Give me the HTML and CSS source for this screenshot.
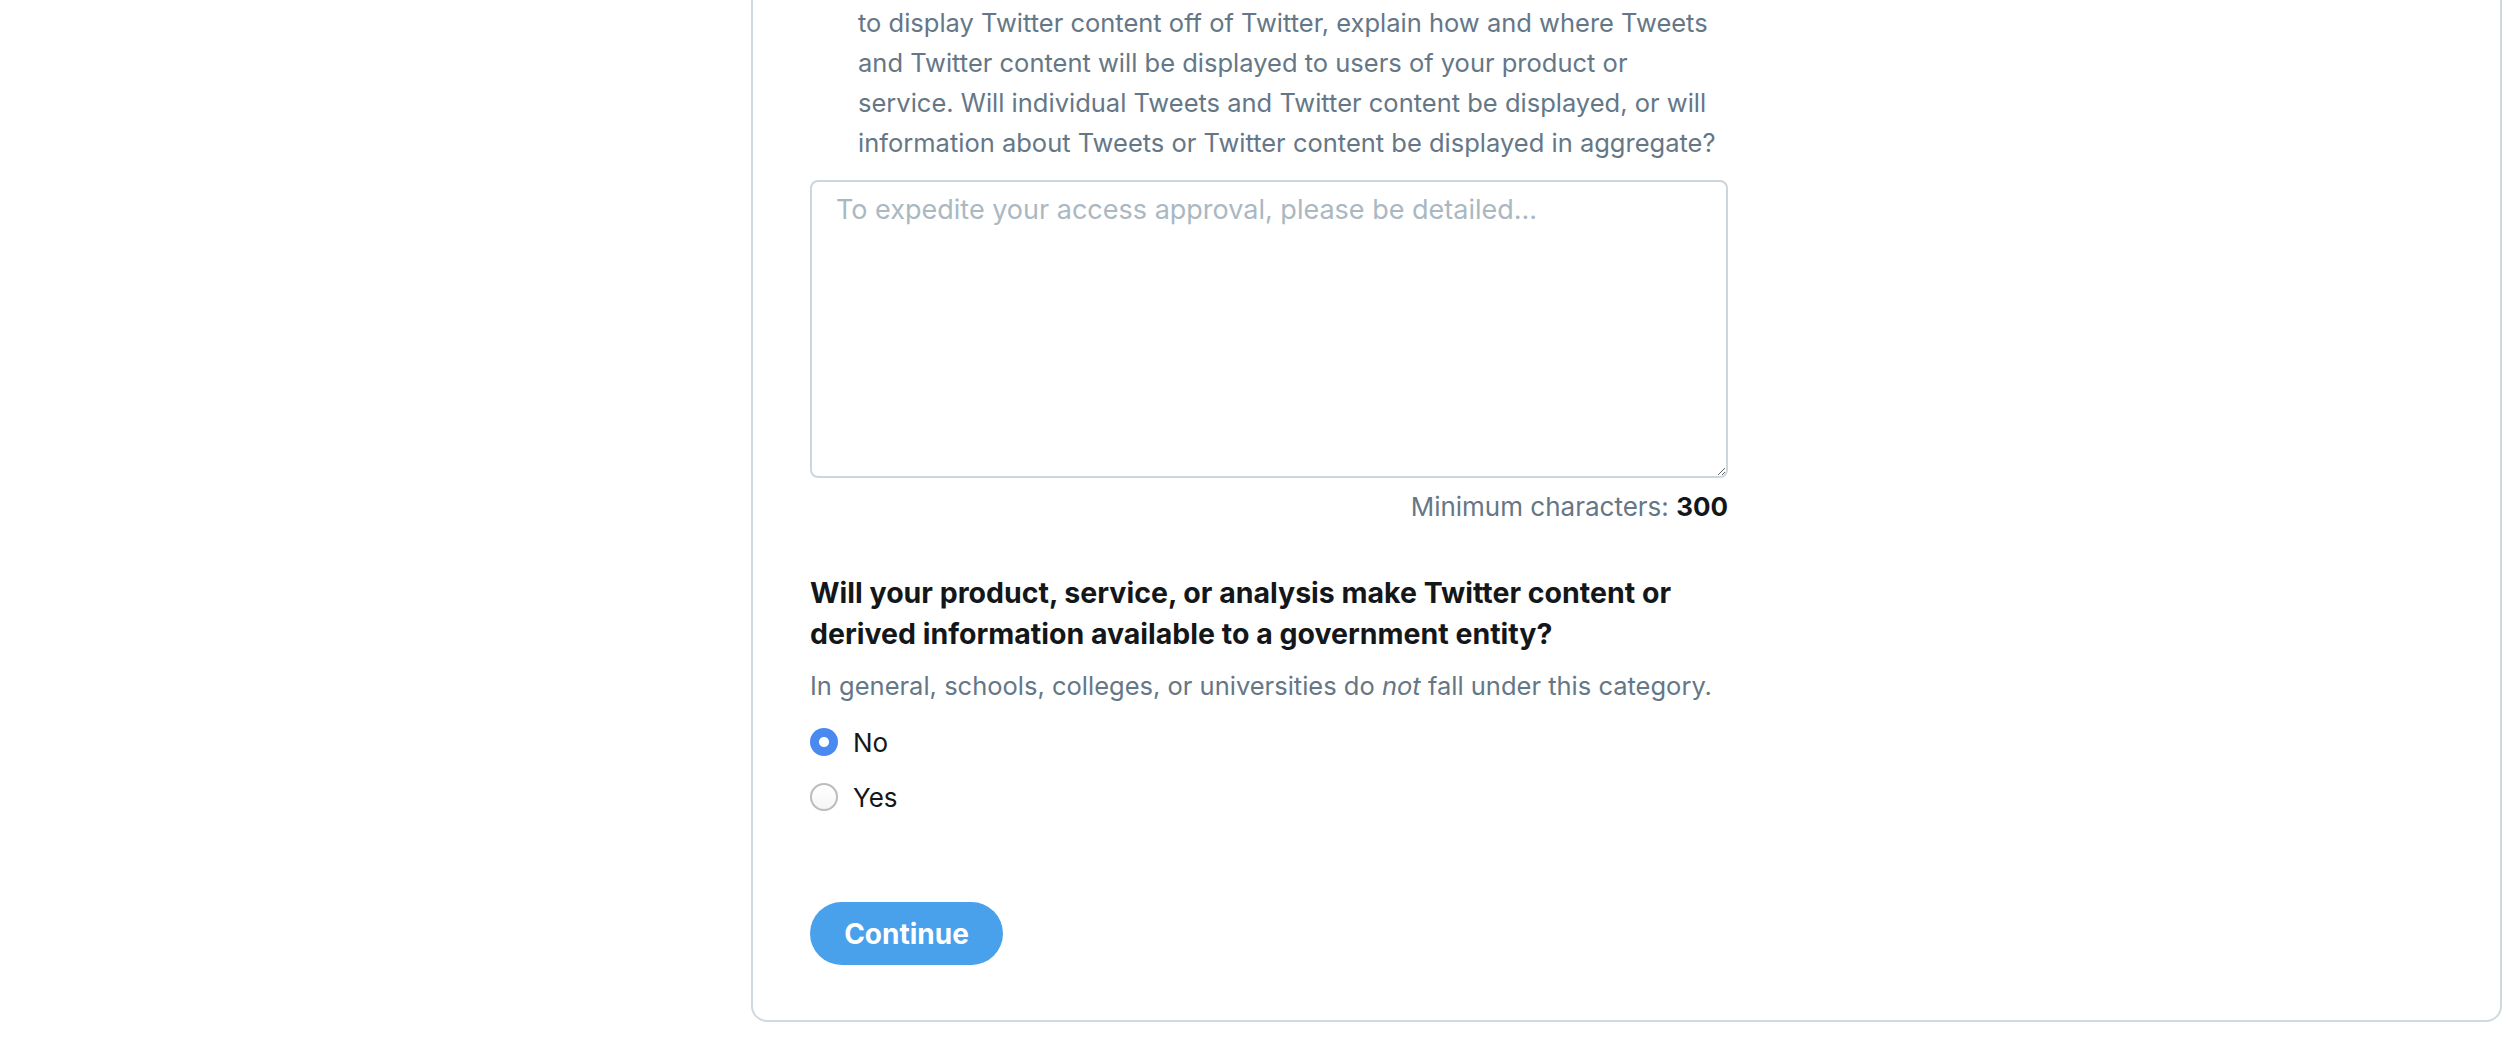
FILE: index.html
```html
<!DOCTYPE html>
<html lang="en">
<head>
<meta charset="utf-8">
<title>Use case details</title>
<link rel="stylesheet" href="styles.css">
</head>
<body>
<div class="page">
  <aside class="sidebar"></aside>
  <main class="card">
    <div class="form">
      <p class="desc">to display Twitter content off of Twitter, explain how and where Tweets<br>and Twitter content will be displayed to users of your product or<br>service. Will individual Tweets and Twitter content be displayed, or will<br>information about Tweets or Twitter content be displayed in aggregate?</p>
      <textarea class="answer" placeholder="To expedite your access approval, please be detailed..."></textarea>
      <div class="min">Minimum characters: <strong>300</strong></div>

      <h2 class="question">Will your product, service, or analysis make Twitter content or<br>derived information available to a government entity?</h2>
      <p class="help">In general, schools, colleges, or universities do <em>not</em> fall under this category.</p>
      <div class="options">
        <label class="option"><input class="radio" type="radio" name="gov" checked><span>No</span></label>
        <label class="option"><input class="radio" type="radio" name="gov"><span>Yes</span></label>
      </div>
      <button class="continue" type="button">Continue</button>
    </div>
  </main>
</div>
</body>
</html>
```

FILE: styles.css
```css
html, body {
  margin: 0;
  padding: 0;
  background: #ffffff;
}
body {
  font-family: Inter, "Noto Sans", sans-serif;
  overflow: hidden;
  height: 1038px;
}
.page {
  display: flex;
  align-items: flex-start;
}
.sidebar {
  flex: none;
  width: 751px;
}
.card {
  flex: none;
  width: 1751px;
  box-sizing: border-box;
  margin-top: -60px;
  border: 2px solid #cfd9de;
  border-radius: 16px;
  padding: 61px 57px 55px;
}
.form {
  width: 918px;
}
.desc {
  margin: 0 0 17px;
  padding-left: 48px;
  color: #657786;
  font-size: 25.5px;
  line-height: 40px;
  white-space: nowrap;
}
.answer {
  display: block;
  width: 918px;
  height: 298px;
  box-sizing: border-box;
  margin: 0;
  border: 2px solid #ccd6dd;
  border-radius: 8px;
  padding: 8px 24px;
  font-family: Inter, "Noto Sans", sans-serif;
  font-size: 27px;
  line-height: 40px;
  color: #14171a;
  resize: vertical;
  outline: none;
}
.answer::placeholder {
  color: #aab8c2;
}
.min {
  margin-top: 9px;
  text-align: right;
  color: #657786;
  font-size: 26px;
  line-height: 40px;
}
.min strong {
  color: #14171a;
  font-weight: 700;
}
.question {
  margin: 45px 0 12px;
  font-size: 28.5px;
  line-height: 41px;
  font-weight: 700;
  color: #14171a;
}
.help {
  margin: 0;
  color: #657786;
  font-size: 25.5px;
  line-height: 40px;
  white-space: nowrap;
}
.options {
  margin-top: 16px;
  display: flex;
  flex-direction: column;
  gap: 15px;
}
.option {
  display: flex;
  align-items: center;
  gap: 15px;
  height: 40px;
  font-size: 26px;
  color: #14171a;
}
.radio {
  -webkit-appearance: none;
  appearance: none;
  flex: none;
  width: 28px;
  height: 28px;
  margin: 0;
  box-sizing: border-box;
  border-radius: 50%;
  border: 2px solid #bcbcbc;
  background: linear-gradient(#ffffff, #f6f6f6);
}
.radio:checked {
  border: none;
  background: radial-gradient(circle, #ffffff 0 4.5px, #4a8af0 5.5px);
}
.continue {
  display: block;
  margin-top: 85px;
  width: 193px;
  height: 63px;
  border: none;
  border-radius: 32px;
  background: #4aa1eb;
  color: #ffffff;
  font-family: Inter, "Noto Sans", sans-serif;
  font-size: 28px;
  font-weight: 700;
  padding: 0;
}
```
